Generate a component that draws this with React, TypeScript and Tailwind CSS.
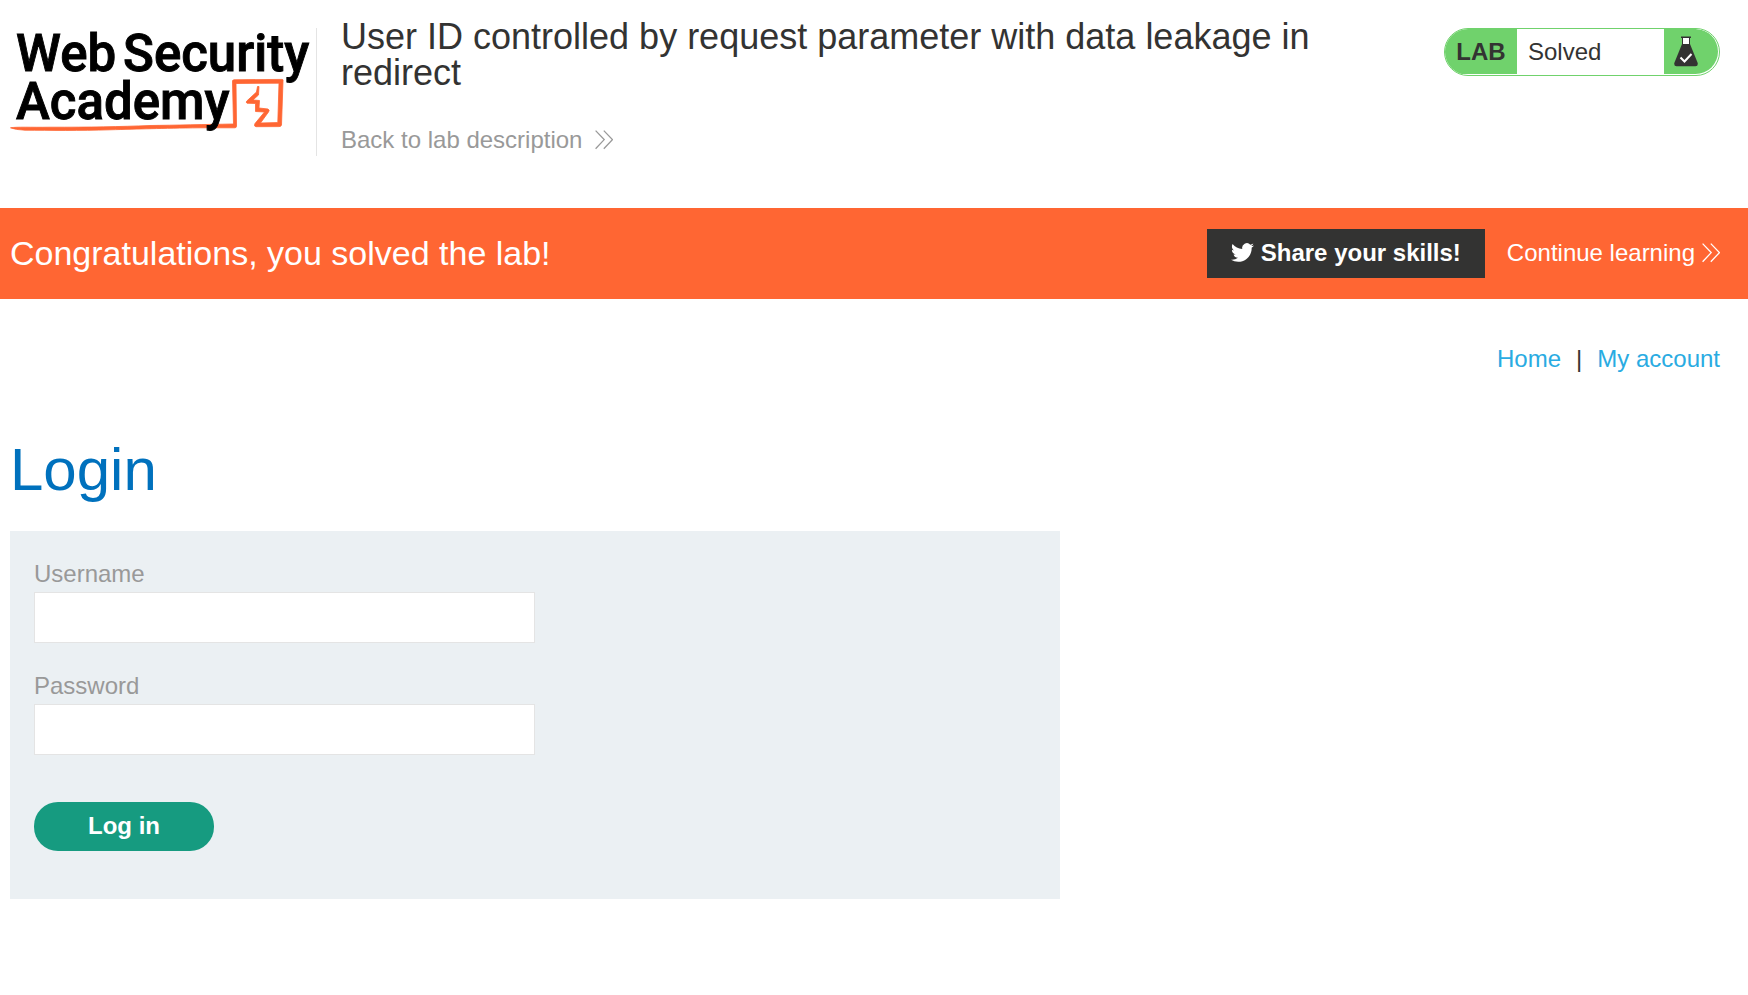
import React from "react";

function Chevrons({ className }: { className: string }) {
  return (
    <svg viewBox="0 0 18 20" className={className} fill="none" stroke="currentColor" strokeWidth="1.3" aria-hidden="true">
      <path d="M0.6 0.6 L9.2 9.6 L0.6 18.8 M8.8 0.6 L17.4 9.6 L8.8 18.8" />
    </svg>
  );
}

function Logo() {
  return (
    <svg viewBox="0 0 306 112" className="h-[112px] w-[306px] shrink-0 overflow-visible" role="img" aria-label="Web Security Academy">
      <g fill="#ff6633" stroke="#ff6633" strokeWidth="0.8" strokeLinejoin="round">
        <path d="M0.500 99.800 C7 98.700 20 99.500 40 99.200 C80 99.300 110 98.700 140 97.500 C165 97.200 195 96.500 223.500 96 L222.500 54 Q222 52 224 51.800 L272 51.400 Q273.500 51.500 273 53 L271.500 97 Q271 98.800 269 98.600 L246 98.700 Q243.500 98.300 245 95.500 L254.500 84 L245.500 83.500 L245.500 75.500 L237 75.200 Q235.500 74.300 237 72.800 L246.500 64 L247.500 58.500 L249 58.500 L248.500 67 L243 72 L249.500 72.500 L249 80 L258 81 Q260 82 258.500 84 L250.500 95 L267.800 94.600 L269 55.200 L226 55.500 L226.500 98 Q226.500 99.800 225 99.800 L190 99.800 C150 100.300 130 101 100 101.800 C70 102.800 40 102.300 15 102.200 Q5 101.800 0.500 99.800 Z" />
      </g>
      <g fill="#000000" stroke="#000000" strokeWidth="0.9" fontFamily="Roboto, sans-serif" fontSize="51" fontWeight="500">
        <text x="6" y="43">Web</text>
        <text x="113" y="43">Security</text>
        <text x="6" y="91">Academy</text>
      </g>
    </svg>
  );
}

function Flask() {
  return (
    <svg viewBox="0 0 24 31" className="h-[31px] w-[24px]" aria-hidden="true">
      <path d="M7 0.500 H17 V2 H16 V9 H8 V2 H7 Z" fill="#333332" />
      <path d="M9 2 H15 V8 H9 Z" fill="#ffffff" />
      <path d="M8 8 H16 L23.700 27 Q24.200 30.300 21.500 30.300 H2.500 Q-0.200 30.300 0.300 27 Z" fill="#333332" />
      <path d="M6.500 21.500 L10.500 25.500 L17.500 18" fill="none" stroke="#ffffff" strokeWidth="2" />
    </svg>
  );
}

function Twitter() {
  return (
    <svg viewBox="0 0 24 24" className="size-[23px]" fill="currentColor" aria-hidden="true">
      <path d="M23.953 4.570a10 10 0 0 1-2.825.775 4.958 4.958 0 0 0 2.163-2.723c-.951.555-2.005.959-3.127 1.184a4.920 4.920 0 0 0-8.384 4.482C7.690 8.095 4.067 6.130 1.640 3.162a4.822 4.822 0 0 0-.666 2.475c0 1.710.87 3.213 2.188 4.096a4.904 4.904 0 0 1-2.228-.616v.06a4.923 4.923 0 0 0 3.946 4.827 4.996 4.996 0 0 1-2.212.085 4.936 4.936 0 0 0 4.604 3.417 9.867 9.867 0 0 1-6.102 2.105c-.39 0-.779-.023-1.170-.067a13.995 13.995 0 0 0 7.557 2.209c9.053 0 13.998-7.496 13.998-13.985 0-.21 0-.42-.015-.63A9.935 9.935 0 0 0 24 4.590z" />
    </svg>
  );
}

function Field({ id, label, type }: { id: string; label: string; type: string }) {
  return (
    <div className="mb-7">
      <label htmlFor={id} className="mb-1 block text-[#999999]">
        {label}
      </label>
      <input id={id} name={id} type={type} className="block h-[51px] w-full max-w-[501px] border border-[#e4e4e4] bg-white px-2 outline-none" />
    </div>
  );
}

export default function App() {
  return (
    <div className="bg-white font-['Liberation_Sans',Arial,sans-serif] text-2xl leading-[29px] text-[#333332]">
      <header className="flex items-start pt-7 pr-7 pb-[52px] pl-2.5">
        <a href="#academy">
          <Logo />
        </a>
        <div className="h-32 w-px shrink-0 bg-[#e4e4e4]" />
        <div className="-mt-[9px] ml-6 min-w-0 flex-1 pr-24">
          <h1 className="text-4xl leading-9">User ID controlled by request parameter with data leakage in redirect</h1>
          <a href="#description" className="mt-[34px] inline-flex items-center gap-[13px] text-[#999999]">
            Back to lab description
            <Chevrons className="h-5 w-[18px]" />
          </a>
        </div>
        <div className="flex h-12 w-[276px] shrink-0 overflow-hidden rounded-3xl border border-[#70d26c] pb-px pr-px">
          <span className="flex w-[72px] items-center justify-center bg-[#70d26c] font-bold">LAB</span>
          <span className="flex flex-1 items-center pl-[11px]">Solved</span>
          <span className="flex w-[54px] items-center rounded-r-3xl bg-[#70d26c] pl-2.5">
            <Flask />
          </span>
        </div>
      </header>

      <section className="flex min-h-[91px] items-center justify-between bg-[#ff6633] pr-7 pl-2.5 text-white">
        <p className="pb-0.5 text-[34px] leading-10">Congratulations, you solved the lab!</p>
        <div className="flex items-center gap-[22px]">
          <button type="button" className="flex h-[49px] items-center gap-[7px] bg-[#333332] px-6 pb-0.5 font-bold">
            <Twitter />
            Share your skills!
          </button>
          <a href="#continue" className="flex items-center gap-[7px] pb-0.5">
            Continue learning
            <Chevrons className="h-5 w-[18px]" />
          </a>
        </div>
      </section>

      <main className="pr-7 pb-24 pl-2.5">
        <nav className="flex justify-end gap-[15px] pt-[45px] text-[#29abe2]">
          <a href="#home">Home</a>
          <span className="text-[#333332]">|</span>
          <a href="#account">My account</a>
        </nav>
        <h1 className="mt-[62px] text-6xl leading-[70px] text-[#0071bd]">Login</h1>
        <form className="mt-[26px] max-w-[1050px] bg-[#ebf0f3] px-6 pt-7 pb-12" onSubmit={(e) => e.preventDefault()}>
          <Field id="username" label="Username" type="text" />
          <Field id="password" label="Password" type="password" />
          <button type="submit" className="mt-[47px] block h-[49px] w-[180px] rounded-3xl bg-[#169b80] pb-0.5 font-bold text-white">
            Log in
          </button>
        </form>
      </main>
    </div>
  );
}
